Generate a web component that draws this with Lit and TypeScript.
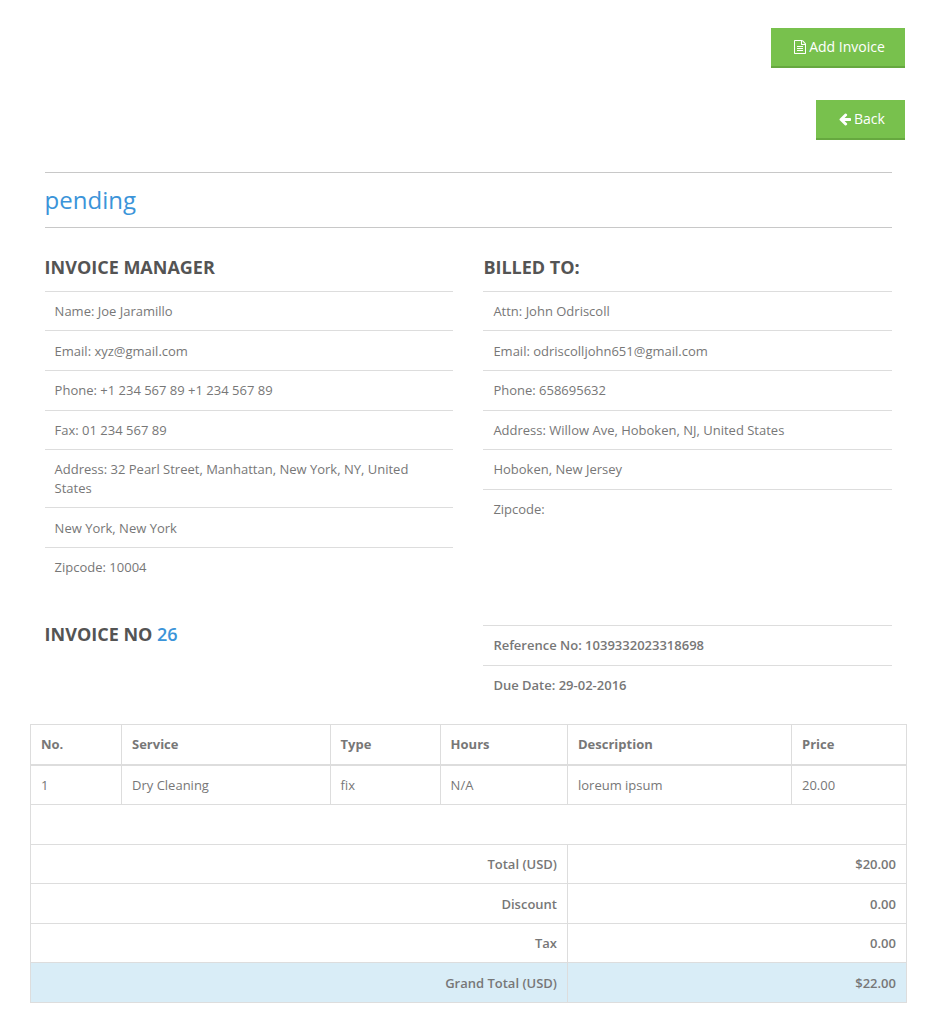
import { LitElement, html, css } from "lit";
import { customElement } from "lit/decorators.js";

const fileIcon = html`<svg class="ic" viewBox="0 0 1792 1792" width="14" height="14" fill="currentColor"><path d="M1596 380q28 28 48 76t20 88v1152q0 40-28 68t-68 28h-1344q-40 0-68-28t-28-68v-1600q0-40 28-68t68-28h896q40 0 88 20t76 48zm-444-244v376h376q-10-29-22-41l-313-313q-12-12-41-22zm384 1528v-1024h-416q-40 0-68-28t-28-68v-416h-768v1536h1280zm-1024-864q0-14 9-23t23-9h704q14 0 23 9t9 23v64q0 14-9 23t-23 9h-704q-14 0-23-9t-9-23v-64zm736 224q14 0 23 9t9 23v64q0 14-9 23t-23 9h-704q-14 0-23-9t-9-23v-64q0-14 9-23t23-9h704zm0 256q14 0 23 9t9 23v64q0 14-9 23t-23 9h-704q-14 0-23-9t-9-23v-64q0-14 9-23t23-9h704z"/></svg>`;
const backIcon = html`<svg class="ic" viewBox="0 0 1792 1792" width="14" height="14" fill="currentColor"><path d="M1664 896v128q0 53-32.5 90.5t-84.5 37.5h-704l293 294q38 36 38 90t-38 90l-75 76q-37 37-90 37-52 0-91-37l-651-652q-37-37-37-90 0-52 37-91l651-650q38-38 91-38 52 0 90 38l75 74q38 38 38 91t-38 91l-293 293h704q52 0 84.5 37.5t32.5 90.5z"/></svg>`;

const manager = [
  "Name: Joe Jaramillo",
  "Email: xyz@gmail.com",
  "Phone: +1 234 567 89 +1 234 567 89",
  "Fax: 01 234 567 89",
  "Address: 32 Pearl Street, Manhattan, New York, NY, United States",
  "New York, New York",
  "Zipcode: 10004",
];
const billed = [
  "Attn: John Odriscoll",
  "Email: odriscolljohn651@gmail.com",
  "Phone: 658695632",
  "Address: Willow Ave, Hoboken, NJ, United States",
  "Hoboken, New Jersey",
  "Zipcode:",
];
const totals = [
  ["Total (USD)", "$20.00"],
  ["Discount", "0.00"],
  ["Tax", "0.00"],
];

@customElement("app-root")
export class AppRoot extends LitElement {
  static styles = css`
    :host {
      display: block;
      width: 937px;
      height: 1035px;
      overflow: hidden;
      box-sizing: border-box;
      padding-top: 28px;
      background: #fff;
      font-family: "Open Sans", sans-serif;
      font-size: 13px;
      line-height: 18.57px;
      color: #777;
    }
    .actions {
      display: flex;
      flex-direction: column;
      align-items: flex-end;
      gap: 32px;
      padding-right: 32px;
    }
    .btn {
      display: flex;
      align-items: center;
      justify-content: center;
      gap: 2px;
      box-sizing: border-box;
      height: 40px;
      background: #78c14d;
      border-bottom: 2px solid #66a83f;
      color: #fff;
      font-size: 14px;
      line-height: 20px;
      padding-left: 2px;
    }
    .add { width: 134px; }
    .back { width: 89px; }
    .ic { display: block; flex: none; }
    .content { padding: 32px 45px 0 44.6px; }
    .status {
      border-top: 1px solid #c8c8c8;
      border-bottom: 1px solid #c8c8c8;
      height: 54px;
      margin: 0;
      font-size: 24px;
      font-weight: 400;
      line-height: 54px;
      color: #3b94d9;
    }
    .cols {
      display: grid;
      grid-template-columns: 408.4px 408.6px;
      column-gap: 30.4px;
    }
    .parties { margin-top: 29px; height: 367px; }
    h3 {
      margin: 0;
      font-size: 18px;
      line-height: 20px;
      font-weight: 700;
      color: #545454;
    }
    h3 span { font-weight: 600; color: #3b94d9; }
    .parties h3 { height: 33.85px; }
    .row {
      border-top: 1px solid #ddd;
      padding: 10.3px 10px 9.71px;
    }
    .row.semi { font-weight: 600; padding: 10px; }
    .refs { height: 100px; }
    .ref-list { margin-top: 1.4px; }
    .lines {
      width: 876px;
      margin-left: 30px;
      border-collapse: collapse;
      table-layout: fixed;
    }
    .lines td, .lines th {
      border: 1px solid #ddd;
      padding: 10.4px 10px 9.61px;
      height: 18.57px;
      text-align: left;
      font-weight: 400;
    }
    .lines th { font-weight: 700; }
    .lines td.semi { font-weight: 600; }
    .lines thead th { border-bottom-width: 2px; }
    .lines td.r { text-align: right; }
    .lines .blue td { background: #d9edf7; }
  `;

  render() {
    return html`
      <div class="actions">
        <div class="btn add">${fileIcon}<span>Add Invoice</span></div>
        <div class="btn back">${backIcon}<span>Back</span></div>
      </div>
      <div class="content">
        <h2 class="status">pending</h2>
        <div class="cols parties">
          <div>
            <h3>INVOICE MANAGER</h3>
            ${manager.map((t) => html`<div class="row">${t}</div>`)}
          </div>
          <div>
            <h3>BILLED TO:</h3>
            ${billed.map((t) => html`<div class="row">${t}</div>`)}
          </div>
        </div>
        <div class="cols refs">
          <h3>INVOICE NO <span>26</span></h3>
          <div class="ref-list">
            <div class="row semi">Reference No: 1039332023318698</div>
            <div class="row semi">Due Date: 29-02-2016</div>
          </div>
        </div>
      </div>
      <table class="lines">
        <colgroup>
          <col style="width:91px" /><col style="width:208.6px" /><col style="width:110px" />
          <col style="width:127.4px" /><col style="width:224px" /><col style="width:115px" />
        </colgroup>
        <thead>
          <tr>
            <th>No.</th><th>Service</th><th>Type</th><th>Hours</th><th>Description</th><th>Price</th>
          </tr>
        </thead>
        <tbody>
          <tr>
            <td>1</td><td>Dry Cleaning</td><td>fix</td><td>N/A</td><td>loreum ipsum</td><td>20.00</td>
          </tr>
          <tr><td colspan="6"></td></tr>
          ${totals.map(
            ([k, v]) => html`<tr>
              <td colspan="4" class="r semi">${k}</td>
              <td colspan="2" class="r semi">${v}</td>
            </tr>`
          )}
          <tr class="blue">
            <td colspan="4" class="r semi">Grand Total (USD)</td>
            <td colspan="2" class="r semi">$22.00</td>
          </tr>
        </tbody>
      </table>
    `;
  }
}
